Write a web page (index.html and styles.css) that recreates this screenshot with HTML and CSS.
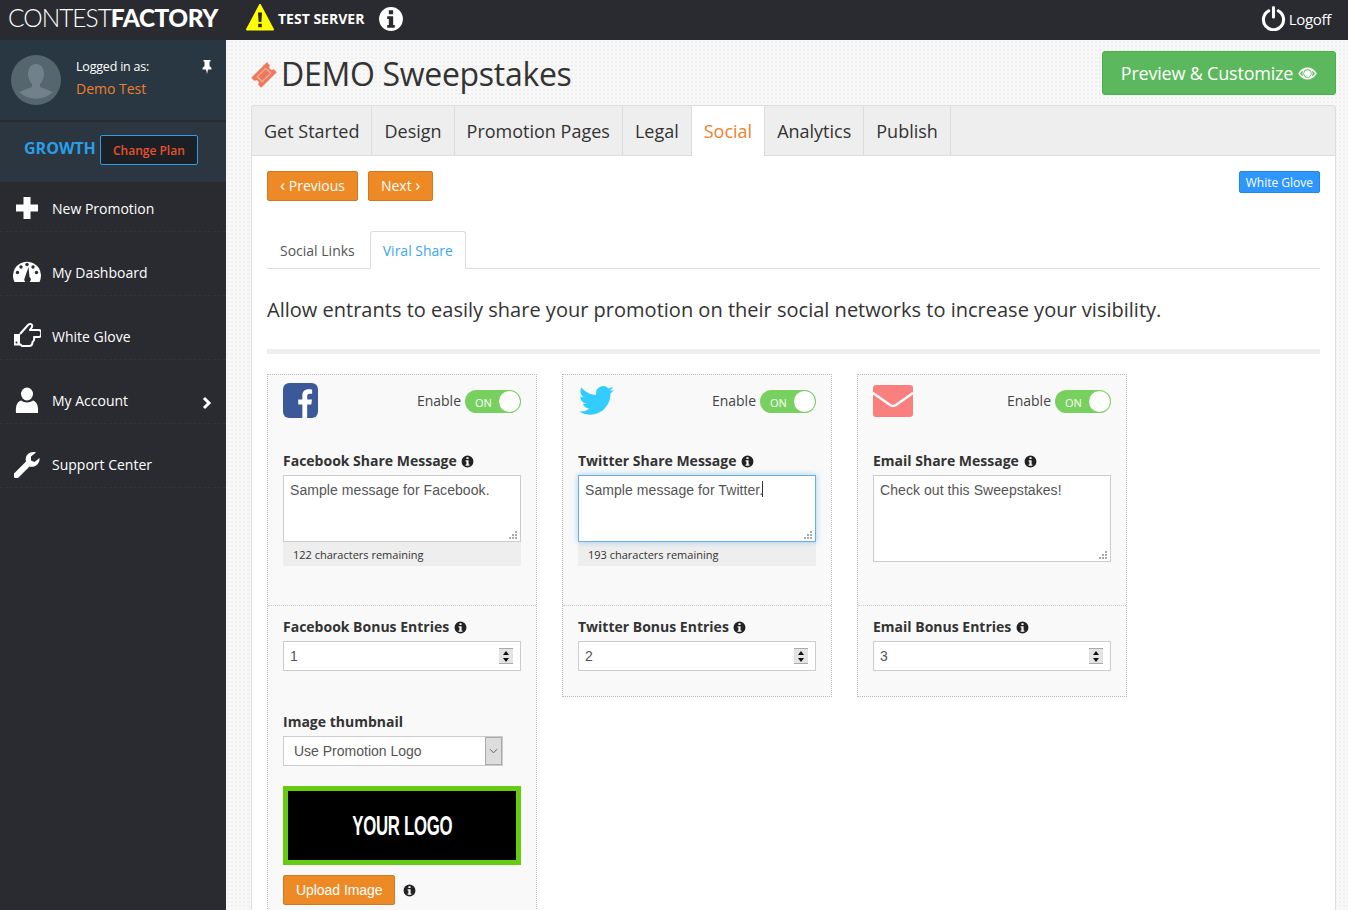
FILE: index.html
```html
<!DOCTYPE html>
<html lang="en">
<head>
    <meta charset="UTF-8">
    <meta name="viewport" content="width=device-width, initial-scale=1.0">
    <title>DEMO Sweepstakes</title>
    <link rel="stylesheet" href="styles.css">
</head>
<body>
    <svg class="defs" width="0" height="0">
        <symbol id="info" viewBox="0 0 24 24">
            <path fill-rule="evenodd" d="M12 1a11 11 0 1 0 0 22a11 11 0 0 0 0-22zM10 4h4v3.500h-4zM8.500 9.500h5.500v8h1.500v2.500h-7v-2.500h1.500v-5.500h-1.500z"/>
        </symbol>
    </svg>

    <header class="topbar">
        <div class="logo"><span class="logo-thin">CONTEST</span><span class="logo-bold">FACTORY</span></div>
        <svg class="warn-icon" viewBox="0 0 28 27">
            <path d="M14 1L27 25.500H1Z" fill="#ffff00" stroke="#ffff00" stroke-width="2" stroke-linejoin="round"/>
            <path d="M12 8.500h4l-.6 9.500h-2.800zM12.200 19.800h3.600v3.400h-3.600z" fill="#26272b"/>
        </svg>
        <span class="test-server">TEST SERVER</span>
        <svg class="top-info" viewBox="0 0 24 24"><use href="#info" fill="#fff"/></svg>
        <a class="logoff">
            <svg class="power" viewBox="0 0 26 26" fill="none" stroke="#fff" stroke-width="3.200" stroke-linecap="round">
                <path d="M8 5.500a10.500 10.500 0 1 0 10 0"/>
                <path d="M13 2v10"/>
            </svg>
            Logoff
        </a>
    </header>

    <div class="page">
        <aside class="sidebar">
            <div class="profile">
                <svg class="avatar" viewBox="0 0 50 50">
                    <circle cx="25" cy="25" r="25" fill="#56666e"/>
                    <path d="M25 9c5 0 8 4 8 10c0 4-2 8-4 10v3l13 5a25 25 0 0 1-34 0l13-5v-3c-2-2-4-6-4-10c0-6 3-10 8-10z" fill="#71808a"/>
                </svg>
                <div class="profile-text">
                    <div class="logged">Logged in as:</div>
                    <div class="username">Demo Test</div>
                </div>
                <svg class="pin" viewBox="0 0 12 14" fill="#fff">
                    <path d="M2.500 0h7v1.500h-1v4.500l2 2v1.500h-3.500l-1 4.500l-1-4.500h-3.500v-1.500l2-2v-4.500h-1z"/>
                </svg>
            </div>
            <div class="plan">
                <span class="plan-name">GROWTH</span>
                <a class="change-plan">Change Plan</a>
            </div>
            <nav class="side-nav">
                <a class="side-item">
                    <svg class="side-icon" viewBox="0 0 28 28" fill="#fff"><path d="M10.500 3h7v7.500h7.500v7h-7.500v7.500h-7v-7.500h-7.500v-7h7.500z"/></svg>
                    New Promotion
                </a>
                <a class="side-item">
                    <svg class="side-icon" viewBox="0 0 28 28">
                        <path fill="#fff" d="M1.500 24a14 14 0 1 1 25 0z"/>
                        <g fill="#2a2b30">
                            <circle cx="14" cy="6.500" r="1.700"/>
                            <circle cx="8" cy="9" r="1.700"/>
                            <circle cx="20" cy="9" r="1.700"/>
                            <circle cx="4.500" cy="14.500" r="1.700"/>
                            <circle cx="23.500" cy="14.500" r="1.700"/>
                            <path d="M15.500 9l1 10a3.200 3.200 0 1 1-5 1.500z"/>
                        </g>
                    </svg>
                    My Dashboard
                </a>
                <a class="side-item">
                    <svg class="side-icon" viewBox="0 0 28 28" fill="none" stroke="#fff" stroke-width="2" stroke-linejoin="round">
                        <path d="M7 12L15 3C17 1 20 2 19 5L17 8H26C29 8 29 15 26 15H21C21.500 17 21 19 19.500 20C19.500 23 18 24 16 24H9L7 22"/>
                        <path fill="#fff" stroke="none" d="M1 12h6v11.500h-6z"/>
                        <circle cx="3.500" cy="20.500" r="1" fill="#2a2b30" stroke="none"/>
                    </svg>
                    White Glove
                </a>
                <a class="side-item">
                    <svg class="side-icon" viewBox="0 0 28 28" fill="#fff">
                        <ellipse cx="14" cy="8" rx="6" ry="6.500"/>
                        <path d="M3 27c-.5-6 .5-11 5-12.500c3.500 2.500 8.500 2.500 12 0c4.500 1.500 5.500 6.500 5 12.500z"/>
                    </svg>
                    My Account
                    <svg class="chevron" viewBox="0 0 10 14" fill="none" stroke="#fff" stroke-width="3"><path d="M2 2l5 5l-5 5"/></svg>
                </a>
                <a class="side-item">
                    <svg class="side-icon" viewBox="0 0 28 28" fill="#fff">
                        <path d="M1 23.500l12-12c-1.500-5 2.500-10 8-9.500c1 0 1.500.3 2 .5l-5 4v4l3.500 1.500l5-4c.6 5-4 10-10 8.500l-12 12c-2 1-4-1-3.500-3z"/>
                    </svg>
                    Support Center
                </a>
            </nav>
        </aside>

        <main class="content">
            <div class="title-row">
                <h1 class="page-title">
                    <svg class="ticket" viewBox="0 0 26 26">
                        <g transform="rotate(-45 13 13)">
                            <path fill="#f0785a" d="M2 6h22v4.500a2.500 2.500 0 0 0 0 5v4.500h-22v-4.500a2.500 2.500 0 0 0 0-5z"/>
                            <path fill="none" stroke="#f9b4a2" stroke-width="1.200" d="M7 9.500h12v7h-12z"/>
                        </g>
                    </svg>
                    DEMO Sweepstakes
                </h1>
                <a class="btn-preview">
                    Preview &amp; Customize
                    <svg class="eye" viewBox="0 0 20 14">
                        <path fill="#fff" fill-rule="evenodd" d="M0 7C2.500 2.500 6 .5 10 .5S17.500 2.500 20 7c-2.500 4.500-6 6.500-10 6.500S2.500 11.500 0 7zM10 2.500a4.500 4.500 0 1 0 0 9a4.500 4.500 0 0 0 0-9zM2 7c1 1.500 2 2.500 3.500 3.300a6 6 0 0 1 0-6.600C4 4.500 3 5.500 2 7zM18 7c-1-1.500-2-2.500-3.500-3.300a6 6 0 0 1 0 6.600C16 9.500 17 8.500 18 7z"/>
                        <circle cx="10" cy="7" r="3.600" fill="#fff"/>
                    </svg>
                </a>
            </div>

            <div class="main-tabs">
                <a class="main-tab">Get Started</a>
                <a class="main-tab">Design</a>
                <a class="main-tab">Promotion Pages</a>
                <a class="main-tab">Legal</a>
                <a class="main-tab active">Social</a>
                <a class="main-tab">Analytics</a>
                <a class="main-tab">Publish</a>
            </div>

            <section class="panel">
                <div class="toolbar">
                    <a class="btn-orange"><span class="angle">&#8249;</span> Previous</a>
                    <a class="btn-orange">Next <span class="angle">&#8250;</span></a>
                    <a class="btn-blue">White Glove</a>
                </div>

                <div class="sub-tabs">
                    <a class="sub-tab">Social Links</a>
                    <a class="sub-tab active">Viral Share</a>
                </div>

                <p class="lead">Allow entrants to easily share your promotion on their social networks to increase your visibility.</p>
                <div class="rule"></div>

                <div class="cards">
                    <div class="card">
                        <div class="card-top">
                            <div class="card-head">
                                <svg class="net-icon" viewBox="0 0 34 34">
                                    <rect width="34" height="34" rx="6" fill="#3b5998"/>
                                    <path fill="#fff" d="M23.500 34V21h4l.6-5h-4.600v-3c0-1.500.5-2.500 2.500-2.500h2.300V6.200c-.5 0-2-.2-3.600-.2c-3.500 0-5.900 2.100-5.900 6v4h-4v5h4v13z"/>
                                </svg>
                                <span class="enable">Enable</span>
                                <span class="toggle"><span class="toggle-on">ON</span><span class="knob"></span></span>
                            </div>
                            <label class="field-label">Facebook Share Message <svg class="i"><use href="#info"/></svg></label>
                            <div class="msg-wrap">
                                <textarea class="msg">Sample message for Facebook.</textarea>
                            </div>
                            <div class="remaining">122 characters remaining</div>
                        </div>
                        <div class="card-bottom">
                            <label class="field-label">Facebook Bonus Entries <svg class="i"><use href="#info"/></svg></label>
                            <div class="number">1<span class="spin"><i class="up"></i><i class="down"></i></span></div>
                            <label class="field-label thumb-label">Image thumbnail</label>
                            <div class="select">
                                <span>Use Promotion Logo</span>
                                <span class="select-arrow">
                                    <svg viewBox="0 0 10 6" fill="none" stroke="#555"><path d="M1 1l4 4l4-4"/></svg>
                                </span>
                            </div>
                            <div class="your-logo"><span class="your-logo-text">YOUR LOGO</span></div>
                            <div class="upload-row">
                                <a class="btn-orange">Upload Image</a>
                                <svg class="i"><use href="#info"/></svg>
                            </div>
                        </div>
                    </div>

                    <div class="card">
                        <div class="card-top">
                            <div class="card-head">
                                <svg class="net-icon bird" viewBox="0 0 24 24">
                                    <path fill="#33ccff" d="M23.953 4.570a10 10 0 01-2.825.775 4.958 4.958 0 002.163-2.723c-.951.555-2.005.959-3.127 1.184a4.920 4.920 0 00-8.384 4.482C7.690 8.095 4.067 6.130 1.640 3.162a4.822 4.822 0 00-.666 2.475c0 1.710.870 3.213 2.188 4.096a4.904 4.904 0 01-2.228-.616v.060a4.923 4.923 0 003.946 4.827 4.996 4.996 0 01-2.212.085 4.936 4.936 0 004.604 3.417 9.867 9.867 0 01-6.102 2.105c-.390 0-.779-.023-1.170-.067a13.995 13.995 0 007.557 2.209c9.053 0 13.998-7.496 13.998-13.985 0-.210 0-.420-.015-.630A9.935 9.935 0 0024 4.590z"/>
                                </svg>
                                <span class="enable">Enable</span>
                                <span class="toggle"><span class="toggle-on">ON</span><span class="knob"></span></span>
                            </div>
                            <label class="field-label">Twitter Share Message <svg class="i"><use href="#info"/></svg></label>
                            <div class="msg-wrap">
                                <textarea class="msg focused">Sample message for Twitter.</textarea>
                                <span class="caret"></span>
                            </div>
                            <div class="remaining">193 characters remaining</div>
                        </div>
                        <div class="card-bottom">
                            <label class="field-label">Twitter Bonus Entries <svg class="i"><use href="#info"/></svg></label>
                            <div class="number">2<span class="spin"><i class="up"></i><i class="down"></i></span></div>
                        </div>
                    </div>

                    <div class="card">
                        <div class="card-top">
                            <div class="card-head">
                                <svg class="net-icon mail" viewBox="0 0 40 32">
                                    <path fill="#fa8080" d="M3 0h34a3 3 0 0 1 3 3v26a3 3 0 0 1-3 3H3a3 3 0 0 1-3-3V3a3 3 0 0 1 3-3z"/>
                                    <path fill="none" stroke="#fff" stroke-width="2.500" d="M0 8l17 12c2 1.200 4 1.200 6 0L40 8"/>
                                </svg>
                                <span class="enable">Enable</span>
                                <span class="toggle"><span class="toggle-on">ON</span><span class="knob"></span></span>
                            </div>
                            <label class="field-label">Email Share Message <svg class="i"><use href="#info"/></svg></label>
                            <div class="msg-wrap">
                                <textarea class="msg tall">Check out this Sweepstakes!</textarea>
                            </div>
                        </div>
                        <div class="card-bottom">
                            <label class="field-label">Email Bonus Entries <svg class="i"><use href="#info"/></svg></label>
                            <div class="number">3<span class="spin"><i class="up"></i><i class="down"></i></span></div>
                        </div>
                    </div>
                </div>
            </section>
        </main>
    </div>
</body>
</html>
```

FILE: styles.css
```css
* {
    margin: 0;
    padding: 0;
    box-sizing: border-box;
}

html,
body {
    height: 100%;
    overflow: hidden;
}

body {
    font-family: "Open Sans", sans-serif;
    font-size: 14px;
    color: #333;
    background: #2a2b30;
}

.defs {
    position: absolute;
}

/* top bar */
.topbar {
    height: 40px;
    background: #2a2b30;
    display: flex;
    align-items: center;
    color: #fff;
}

.logo {
    margin-left: 8px;
    margin-top: -5px;
    width: 220px;
    font-family: Lato, sans-serif;
    font-size: 24.5px;
    letter-spacing: -1px;
    white-space: nowrap;
}

.logo-thin {
    font-weight: 300;
}

.logo-bold {
    font-weight: 900;
    letter-spacing: -0.5px;
}

.warn-icon {
    width: 28px;
    height: 27px;
    margin-left: 18px;
    margin-top: -5px;
}

.test-server {
    margin-left: 4px;
    margin-top: -4px;
    font-weight: 700;
    font-size: 14px;
}

.top-info {
    width: 26px;
    height: 26px;
    margin-left: 14px;
    margin-top: -3px;
}

.logoff {
    margin-left: auto;
    margin-right: 17px;
    margin-top: -2px;
    display: flex;
    align-items: center;
    gap: 3px;
    font-size: 15px;
    letter-spacing: -0.3px;
}

.power {
    width: 25px;
    height: 26px;
    margin-top: -3px;
}

.page {
    display: flex;
    height: 870px;
}

/* sidebar */
.sidebar {
    width: 226px;
    flex: none;
    background: #2a2b30;
    color: #fff;
}

.profile {
    height: 80px;
    background: #293742;
    padding: 15px 11px;
    display: flex;
}

.avatar {
    width: 50px;
    height: 50px;
    flex: none;
}

.profile-text {
    margin-left: 15px;
    flex: 1;
}

.logged {
    font-size: 12.500px;
    line-height: 18px;
    margin-top: 3px;
    letter-spacing: -0.2px;
}

.username {
    font-size: 14px;
    line-height: 20px;
    margin-top: 3px;
    color: #ee7f2d;
}

.pin {
    width: 12px;
    height: 14px;
    margin: 5px 2px 0 0;
}

.plan {
    height: 60px;
    margin-top: 2px;
    background: #2b3640;
    display: flex;
    align-items: flex-start;
    padding: 13px 0 0 24px;
    gap: 4px;
}

.plan-name {
    font-size: 16px;
    font-weight: 700;
    color: #2a9fe8;
    line-height: 24px;
    margin-top: 1px;
}

.change-plan {
    width: 98px;
    height: 30px;
    background: #1b2026;
    border: 1px solid #2a9fe8;
    border-radius: 2px;
    color: #e8502a;
    font-size: 12px;
    font-weight: 600;
    text-align: center;
    line-height: 29px;
}

.side-item {
    height: 64px;
    padding: 18px 0 0 13px;
    display: flex;
    align-items: center;
    font-size: 14px;
    border-bottom: 1px dashed #33343a;
}

.side-item:first-child {
    height: 50px;
    padding-top: 4px;
}

.side-icon {
    width: 28px;
    height: 28px;
    margin-right: 11px;
    margin-top: -2px;
    flex: none;
}

.chevron {
    width: 10px;
    height: 14px;
    margin-left: auto;
    margin-right: 14px;
    margin-top: 5px;
}

/* main */
.content {
    flex: 1;
    padding: 11px 12px 0 25px;
    background-color: #f8f8f8;
    background-image: radial-gradient(#efefef 1px, transparent 1px);
    background-size: 4px 4px;
    display: flex;
    flex-direction: column;
    overflow: hidden;
}

.title-row {
    display: flex;
    justify-content: space-between;
    height: 44px;
    margin-bottom: 10px;
}

.page-title {
    font-size: 32px;
    font-weight: 400;
    line-height: 44px;
    color: #333;
    display: flex;
    align-items: center;
    letter-spacing: -0.3px;
    padding-top: 1px;
}

.ticket {
    width: 26px;
    height: 26px;
    margin-right: 4px;
    margin-top: 3px;
}

.btn-preview {
    width: 234px;
    height: 44px;
    background: #5cb85c;
    border: 1px solid #4cae4c;
    border-radius: 3px;
    color: #fff;
    font-size: 18px;
    display: flex;
    align-items: center;
    justify-content: center;
    gap: 5px;
    letter-spacing: -0.2px;
}

.eye {
    width: 19px;
    height: 13px;
}

.main-tabs {
    height: 51px;
    display: flex;
    background: #eee;
    border: 1px solid #ddd;
    border-radius: 3px 3px 0 0;
}

.main-tab {
    padding: 0 12px;
    font-size: 18px;
    line-height: 50px;
    border-right: 1px solid #ddd;
    color: #333;
}

.main-tab.active {
    background: #fff;
    color: #ee7f2d;
    height: 50px;
}

.panel {
    flex: 1;
    background: #fff;
    border: 1px solid #ddd;
    border-top: none;
    padding: 15px;
}

.toolbar {
    display: flex;
    align-items: flex-start;
    gap: 10px;
}

.btn-orange {
    display: inline-block;
    height: 30px;
    padding: 0 12px;
    background: #ee8a26;
    border: 1px solid #cf7a22;
    border-radius: 2px;
    color: #fff;
    font-size: 14px;
    line-height: 28px;
}

.angle {
    font-size: 17px;
    line-height: 20px;
}

.btn-blue {
    margin-left: auto;
    height: 22px;
    padding: 0 6px;
    background: #2e96ff;
    border: 1px solid #2585e0;
    border-radius: 2px;
    color: #fff;
    font-size: 12px;
    line-height: 22px;
}

.sub-tabs {
    margin-top: 30px;
    height: 38px;
    display: flex;
    border-bottom: 1px solid #ddd;
}

.sub-tab {
    height: 38px;
    padding: 0 15px 0 13px;
    line-height: 40px;
    color: #555;
    font-size: 14px;
}

.sub-tab.active {
    padding: 0 12px;
    background: #fff;
    border: 1px solid #ddd;
    border-bottom-color: #fff;
    border-radius: 3px 3px 0 0;
    color: #3ea6f0;
    line-height: 38px;
}

.lead {
    margin-top: 27px;
    font-size: 20px;
    line-height: 28px;
    color: #333;
    letter-spacing: 0.01px;
}

.rule {
    height: 5px;
    margin-top: 25px;
    background: #eee;
}

/* share cards */
.cards {
    margin-top: 20px;
    display: flex;
    align-items: flex-start;
    gap: 25px;
}

.card {
    width: 270px;
    background: #f9f9f9;
    border: 1px dotted #bbb;
}

.card-top {
    height: 231px;
    padding: 0 15px;
    border-bottom: 1px dotted #ccc;
}

.card-head {
    height: 76px;
    display: flex;
    align-items: flex-start;
    padding-top: 15px;
}

.net-icon {
    width: 35px;
    height: 35px;
    margin-top: -7px;
}

.bird {
    margin-top: -7px;
    margin-left: 1px;
}

.mail {
    width: 40px;
    height: 32px;
    margin-top: -5px;
}

.enable {
    margin-left: auto;
    color: #444;
    line-height: 22px;
}

.toggle {
    width: 56px;
    height: 23px;
    margin-left: 4px;
    background: #78d05f;
    border-radius: 12px;
    position: relative;
    display: block;
}

.toggle-on {
    position: absolute;
    left: 10px;
    top: 4px;
    color: #fff;
    font-size: 11px;
    line-height: 17px;
}

.knob {
    position: absolute;
    right: 1px;
    top: 1px;
    width: 21px;
    height: 21px;
    background: #fff;
    border-radius: 50%;
}

.field-label {
    display: block;
    font-weight: 700;
    font-size: 14px;
    line-height: 20px;
    color: #333;
    margin-bottom: 4px;
}

.i {
    width: 13px;
    height: 13px;
    vertical-align: -1.500px;
    margin-left: 1px;
    fill: #222;
}

.msg {
    display: block;
    width: 238px;
    height: 67px;
    padding: 5px 6px;
    background: #fff;
    border: 1px solid #ccc;
    color: #555;
    font-family: "Liberation Sans", sans-serif;
    font-size: 14px;
    line-height: 18px;
    letter-spacing: 0.07px;
    resize: none;
}

.msg.tall {
    height: 87px;
}

.msg.focused {
    border-color: #66afe9;
    box-shadow: 0 0 6px rgba(102, 175, 233, 0.6);
    outline: none;
}

.msg-wrap {
    position: relative;
}

/* resize grip dots */
.msg-wrap::after {
    content: "";
    position: absolute;
    right: 4px;
    bottom: 3px;
    width: 2px;
    height: 2px;
    background: #aaa;
    box-shadow: -3px 0 #aaa, -6px 0 #aaa, 0 -3px #aaa, -3px -3px #aaa, 0 -6px #aaa;
}

.caret {
    position: absolute;
    left: 184px;
    top: 6px;
    width: 1px;
    height: 16px;
    background: #333;
}

.remaining {
    height: 24px;
    padding-left: 10px;
    background: #eee;
    font-size: 11px;
    line-height: 26px;
    color: #333;
}

.card-bottom {
    padding: 11px 15px 25px;
}

.number {
    height: 30px;
    padding-left: 6px;
    background: #fff;
    border: 1px solid #ccc;
    color: #555;
    font-family: "Liberation Sans", sans-serif;
    font-size: 14px;
    line-height: 29px;
    position: relative;
}

.spin {
    position: absolute;
    right: 7px;
    top: 6px;
    width: 14px;
    height: 16px;
    background: #e4e4e4;
    border: 1px solid #aaa;
    border-width: 1px 0;
    display: flex;
    flex-direction: column;
    align-items: center;
    justify-content: space-around;
}

.spin i {
    width: 0;
    height: 0;
    border-left: 3.500px solid transparent;
    border-right: 3.500px solid transparent;
}

.spin .up {
    border-bottom: 4px solid #111;
}

.spin .down {
    border-top: 4px solid #111;
}

.thumb-label {
    margin-top: 41px;
}

.select {
    width: 220px;
    height: 30px;
    padding-left: 10px;
    background: #fff;
    border: 1px solid #ccc;
    color: #555;
    font-family: "Liberation Sans", sans-serif;
    font-size: 14px;
    line-height: 29px;
    display: flex;
    justify-content: space-between;
}

.select-arrow {
    width: 17px;
    height: 28px;
    background: #ddd;
    border: 1px solid #aaa;
    display: flex;
    align-items: center;
    justify-content: center;
}

.select-arrow svg {
    width: 9px;
    height: 6px;
}

.your-logo {
    margin-top: 20px;
    height: 79px;
    background: #000;
    border: 5px solid #66cc11;
    line-height: 69px;
    text-align: center;
}

.your-logo-text {
    display: inline-block;
    color: #fff;
    font-family: "Liberation Sans", sans-serif;
    font-weight: 700;
    font-size: 28px;
    letter-spacing: -0.5px;
    transform: scaleX(0.6);
}

.upload-row {
    margin-top: 10px;
    display: flex;
    align-items: center;
    gap: 7px;
}

.upload-row .btn-orange {
    font-family: "Liberation Sans", sans-serif;
    letter-spacing: -0.05px;
    padding-right: 11px;
}
```
